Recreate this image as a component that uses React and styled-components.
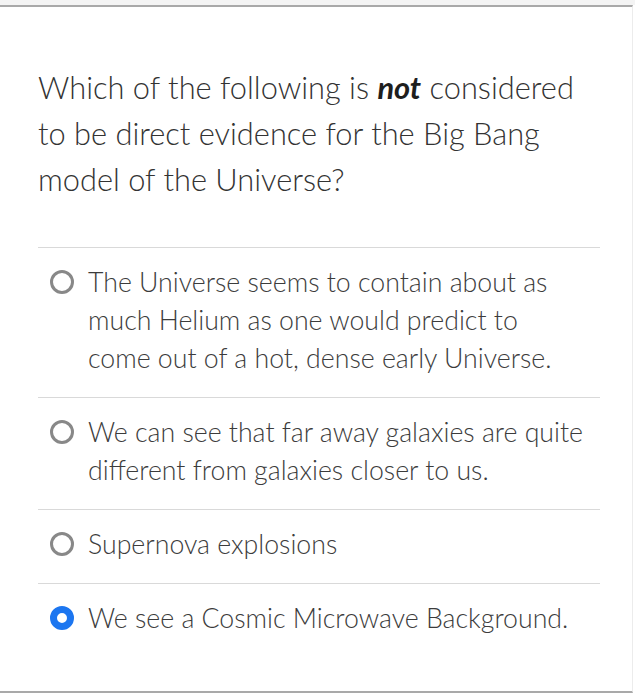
import React from 'react';
import styled, { createGlobalStyle } from 'styled-components';

const GlobalStyle = createGlobalStyle`
    html, body {
        margin: 0;
        padding: 0;
        background: #fff;
    }
    body {
        font-family: Lato, "Open Sans", sans-serif;
    }
`;

const Page = styled.div`
    width: 635px;
    height: 700px;
    box-sizing: border-box;
    padding-top: 5px;
    background: linear-gradient(#f4f4f4, #f4f4f4) top / 100% 5px no-repeat, #fff;
`;

const Card = styled.div`
    width: 633px;
    height: 688px;
    box-sizing: border-box;
    border-top: 2px solid #a9a9a9;
    border-bottom: 2px solid #a9a9a9;
    border-right: 1px solid #ececec;
    background: #fff;
`;

const Question = styled.p`
    margin: 0;
    padding: 58px 40px 0 38px;
    height: 240px;
    box-sizing: border-box;
    font-size: 30.8px;
    line-height: 46px;
    color: #333;
    font-weight: 300;

    strong {
        font-weight: 700;
        font-style: italic;
        color: #1e1e1e;
    }
`;

const Options = styled.div`
    display: flex;
    flex-direction: column;
`;

const Divider = styled.div`
    margin-left: 38px;
    width: 562px;
    height: 1px;
    background: #d9d9d9;
`;

const Option = styled.label`
    display: flex;
    align-items: flex-start;
    gap: 14px;
    padding: 15px 0 20px 50px;
    cursor: pointer;
`;

const Radio = styled.span`
    flex: none;
    width: 24px;
    height: 24px;
    margin-top: 7px;
    box-sizing: border-box;
    border-radius: 50%;
    border: ${p => (p.$checked ? '7px solid #1c76f0' : '3px solid #888')};
    background: #fff;
`;

const OptionText = styled.span`
    max-width: 498px;
    font-size: 26.7px;
    line-height: 38px;
    font-weight: 300;
    color: #3c3c3c;
`;

const answers = [
    'The Universe seems to contain about as much Helium as one would predict to come out of a hot, dense early Universe.',
    'We can see that far away galaxies are quite different from galaxies closer to us.',
    'Supernova explosions',
    'We see a Cosmic Microwave Background.',
];

const App = () => {
    const selected = 3;
    return (
        <Page>
            <GlobalStyle />
            <Card>
                <Question>
                    Which of the following is <strong>not</strong> considered to be direct evidence for the Big Bang model of the Universe?
                </Question>
                <Options>
                    {answers.map((text, i) => (
                        <React.Fragment key={i}>
                            <Divider />
                            <Option>
                                <Radio $checked={i === selected} />
                                <OptionText>{text}</OptionText>
                            </Option>
                        </React.Fragment>
                    ))}
                </Options>
            </Card>
        </Page>
    );
};

export default App;
